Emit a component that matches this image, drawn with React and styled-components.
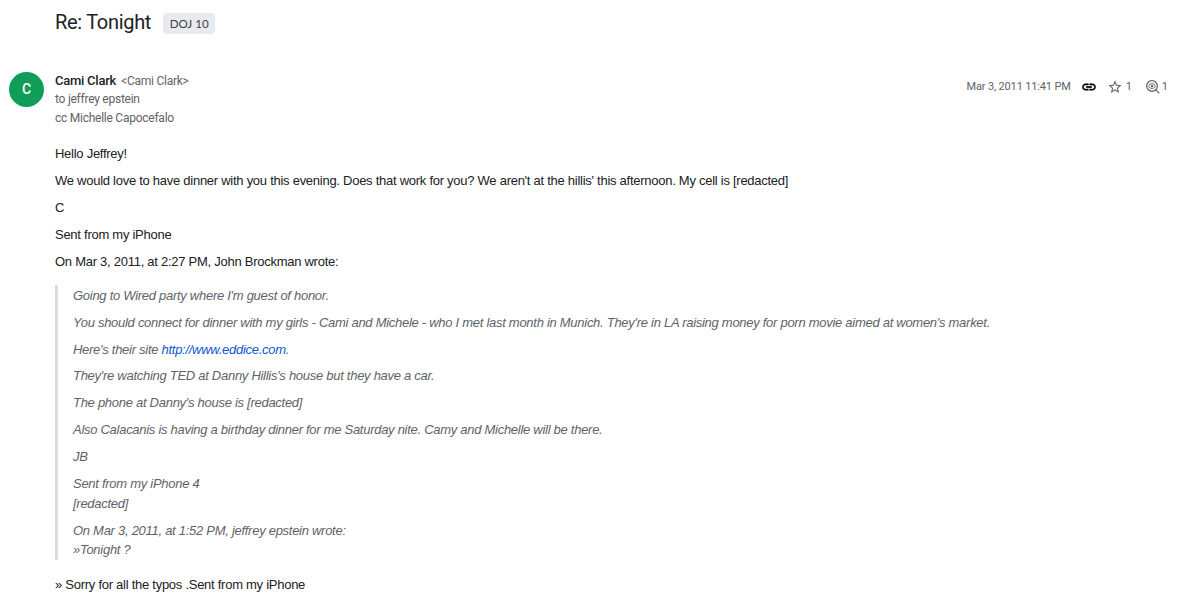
import React from 'react';
import styled, { createGlobalStyle } from 'styled-components';

const GlobalStyle = createGlobalStyle`
    * { box-sizing: border-box; }
    body {
        margin: 0;
        background: #fff;
        color: #202124;
        font-family: Roboto, "Liberation Sans", sans-serif;
    }
    p { margin: 0; }
`;

const Page = styled.main`
    width: 1200px;
    height: 612px;
    overflow: hidden;
    padding: 8px 32px 0 9px;
`;

const Header = styled.header`
    display: flex;
    align-items: center;
    height: 28px;
    margin-left: 46px;
`;

const Subject = styled.h1`
    margin: 0;
    font-size: 20px;
    font-weight: 400;
    letter-spacing: -0.3px;
    line-height: 28px;
    white-space: nowrap;
`;

const Label = styled.span`
    margin: 2px 0 0 12px;
    padding: 0 6.5px;
    border-radius: 4px;
    background: #e8eaed;
    color: #3c4043;
    font-family: Lato, Roboto, sans-serif;
    font-size: 11.6px;
    line-height: 21px;
`;

const Message = styled.article`
    display: flex;
    margin-top: 36px;
`;

const Avatar = styled.div`
    flex: none;
    width: 35px;
    height: 35px;
    margin-right: 11px;
    border-radius: 50%;
    background: #0f9d58;
    color: #fff;
    font-size: 14px;
    font-weight: 500;
    line-height: 35px;
    text-align: center;
`;

const Content = styled.div`
    flex: 1;
    min-width: 0;
`;

const Meta = styled.div`
    display: flex;
    justify-content: space-between;
    height: 55px;
    color: #5f6368;
    font-size: 12px;
    letter-spacing: -0.25px;
    line-height: 18.3px;
`;

const Sender = styled.strong`
    margin-right: 5px;
    color: #202124;
    font-size: 13px;
    font-weight: 500;
`;

const Actions = styled.div`
    display: flex;
    align-items: center;
    height: 18px;
    margin-top: 6px;
`;

const Sent = styled.span`
    font-size: 11px;
    letter-spacing: -0.16px;
`;

const Action = styled.span`
    display: flex;
    align-items: center;
    gap: ${props => props.$inner || 3}px;
    margin-left: ${props => props.$gap}px;
    color: ${props => props.$color || '#5f6368'};
    font-size: 11px;
    letter-spacing: 0;

    svg {
        display: block;
        fill: currentColor;
    }
`;

const Body = styled.div`
    margin-top: 17px;
    font-family: "Liberation Sans", Arial, sans-serif;
    font-size: 13px;
    letter-spacing: -0.265px;
    line-height: 19.8px;
`;

const Line = styled.p`
    margin-bottom: 7.1px;
    white-space: nowrap;
`;

const Quote = styled.blockquote`
    margin: 14px 0 14.4px;
    padding: 0.4px 0 0.2px 15px;
    border-left: 3px solid #dadce0;
    color: #5f6368;
    font-style: italic;
    letter-spacing: -0.278px;

    ${Line}:last-child {
        margin-bottom: 0;
    }
`;

const Link = styled.a`
    color: #0b57d0;
    text-decoration: none;
`;

const LinkIcon = () => (
    <svg width="16" height="16" viewBox="0 0 24 24" stroke="currentColor" strokeWidth="0.7">
        <path d="M3.9 12c0-1.71 1.39-3.1 3.1-3.1h4V7H7c-2.76 0-5 2.24-5 5s2.24 5 5 5h4v-1.9H7c-1.71 0-3.1-1.39-3.1-3.1zM8 13h8v-2H8v2zm9-6h-4v1.9h4c1.71 0 3.1 1.39 3.1 3.1s-1.39 3.1-3.1 3.1h-4V17h4c2.76 0 5-2.24 5-5s-2.24-5-5-5z" />
    </svg>
);

const StarIcon = () => (
    <svg width="16" height="16" viewBox="0 0 24 24">
        <path d="M22 9.24l-7.19-.62L12 2 9.19 8.63 2 9.24l5.46 4.73L5.82 21 12 17.27 18.18 21l-1.63-7.03L22 9.24zM12 15.4l-3.76 2.27 1-4.28-3.32-2.88 4.38-.38L12 6.1l1.71 4.04 4.38.38-3.32 2.88 1 4.28L12 15.4z" />
    </svg>
);

const InspectIcon = () => (
    <svg width="16" height="16" viewBox="0 0 24 24">
        <g fill="none" stroke="currentColor" strokeWidth="1.9">
            <circle cx="10.5" cy="10.5" r="8" />
            <path d="M16 16l5.5 5.5" />
            <ellipse cx="10.5" cy="10.5" rx="4.8" ry="3.7" strokeWidth="1.3" />
        </g>
        <circle cx="10.5" cy="10.5" r="1.8" />
    </svg>
);

export default function App() {
    return (
        <Page>
            <GlobalStyle />
            <Header>
                <Subject>Re: Tonight</Subject>
                <Label>DOJ 10</Label>
            </Header>
            <Message>
                <Avatar>C</Avatar>
                <Content>
                    <Meta>
                        <div>
                            <p><Sender>Cami Clark</Sender>&lt;Cami Clark&gt;</p>
                            <p>to jeffrey epstein</p>
                            <p>cc Michelle Capocefalo</p>
                        </div>
                        <Actions>
                            <Sent>Mar 3, 2011 11:41 PM</Sent>
                            <Action $gap={10} $color="#000"><LinkIcon /></Action>
                            <Action $gap={10}><StarIcon />1</Action>
                            <Action $gap={13} $inner={1}><InspectIcon />1</Action>
                        </Actions>
                    </Meta>
                    <Body>
                        <Line>Hello Jeffrey!</Line>
                        <Line>We would love to have dinner with you this evening. Does that work for you? We aren't at the hillis' this afternoon. My cell is [redacted]</Line>
                        <Line>C</Line>
                        <Line>Sent from my iPhone</Line>
                        <Line>On Mar 3, 2011, at 2:27 PM, John Brockman wrote:</Line>
                        <Quote>
                            <Line>Going to Wired party where I'm guest of honor.</Line>
                            <Line>You should connect for dinner with my girls - Cami and Michele - who I met last month in Munich. They're in LA raising money for porn movie aimed at women's market.</Line>
                            <Line>Here's their site <Link>http://www.eddice.com</Link>.</Line>
                            <Line>They're watching TED at Danny Hillis's house but they have a car.</Line>
                            <Line>The phone at Danny's house is [redacted]</Line>
                            <Line>Also Calacanis is having a birthday dinner for me Saturday nite. Camy and Michelle will be there.</Line>
                            <Line>JB</Line>
                            <Line>Sent from my iPhone 4<br />[redacted]</Line>
                            <Line>On Mar 3, 2011, at 1:52 PM, jeffrey epstein wrote:<br />»Tonight ?</Line>
                        </Quote>
                        <Line>» Sorry for all the typos .Sent from my iPhone</Line>
                    </Body>
                </Content>
            </Message>
        </Page>
    );
}
